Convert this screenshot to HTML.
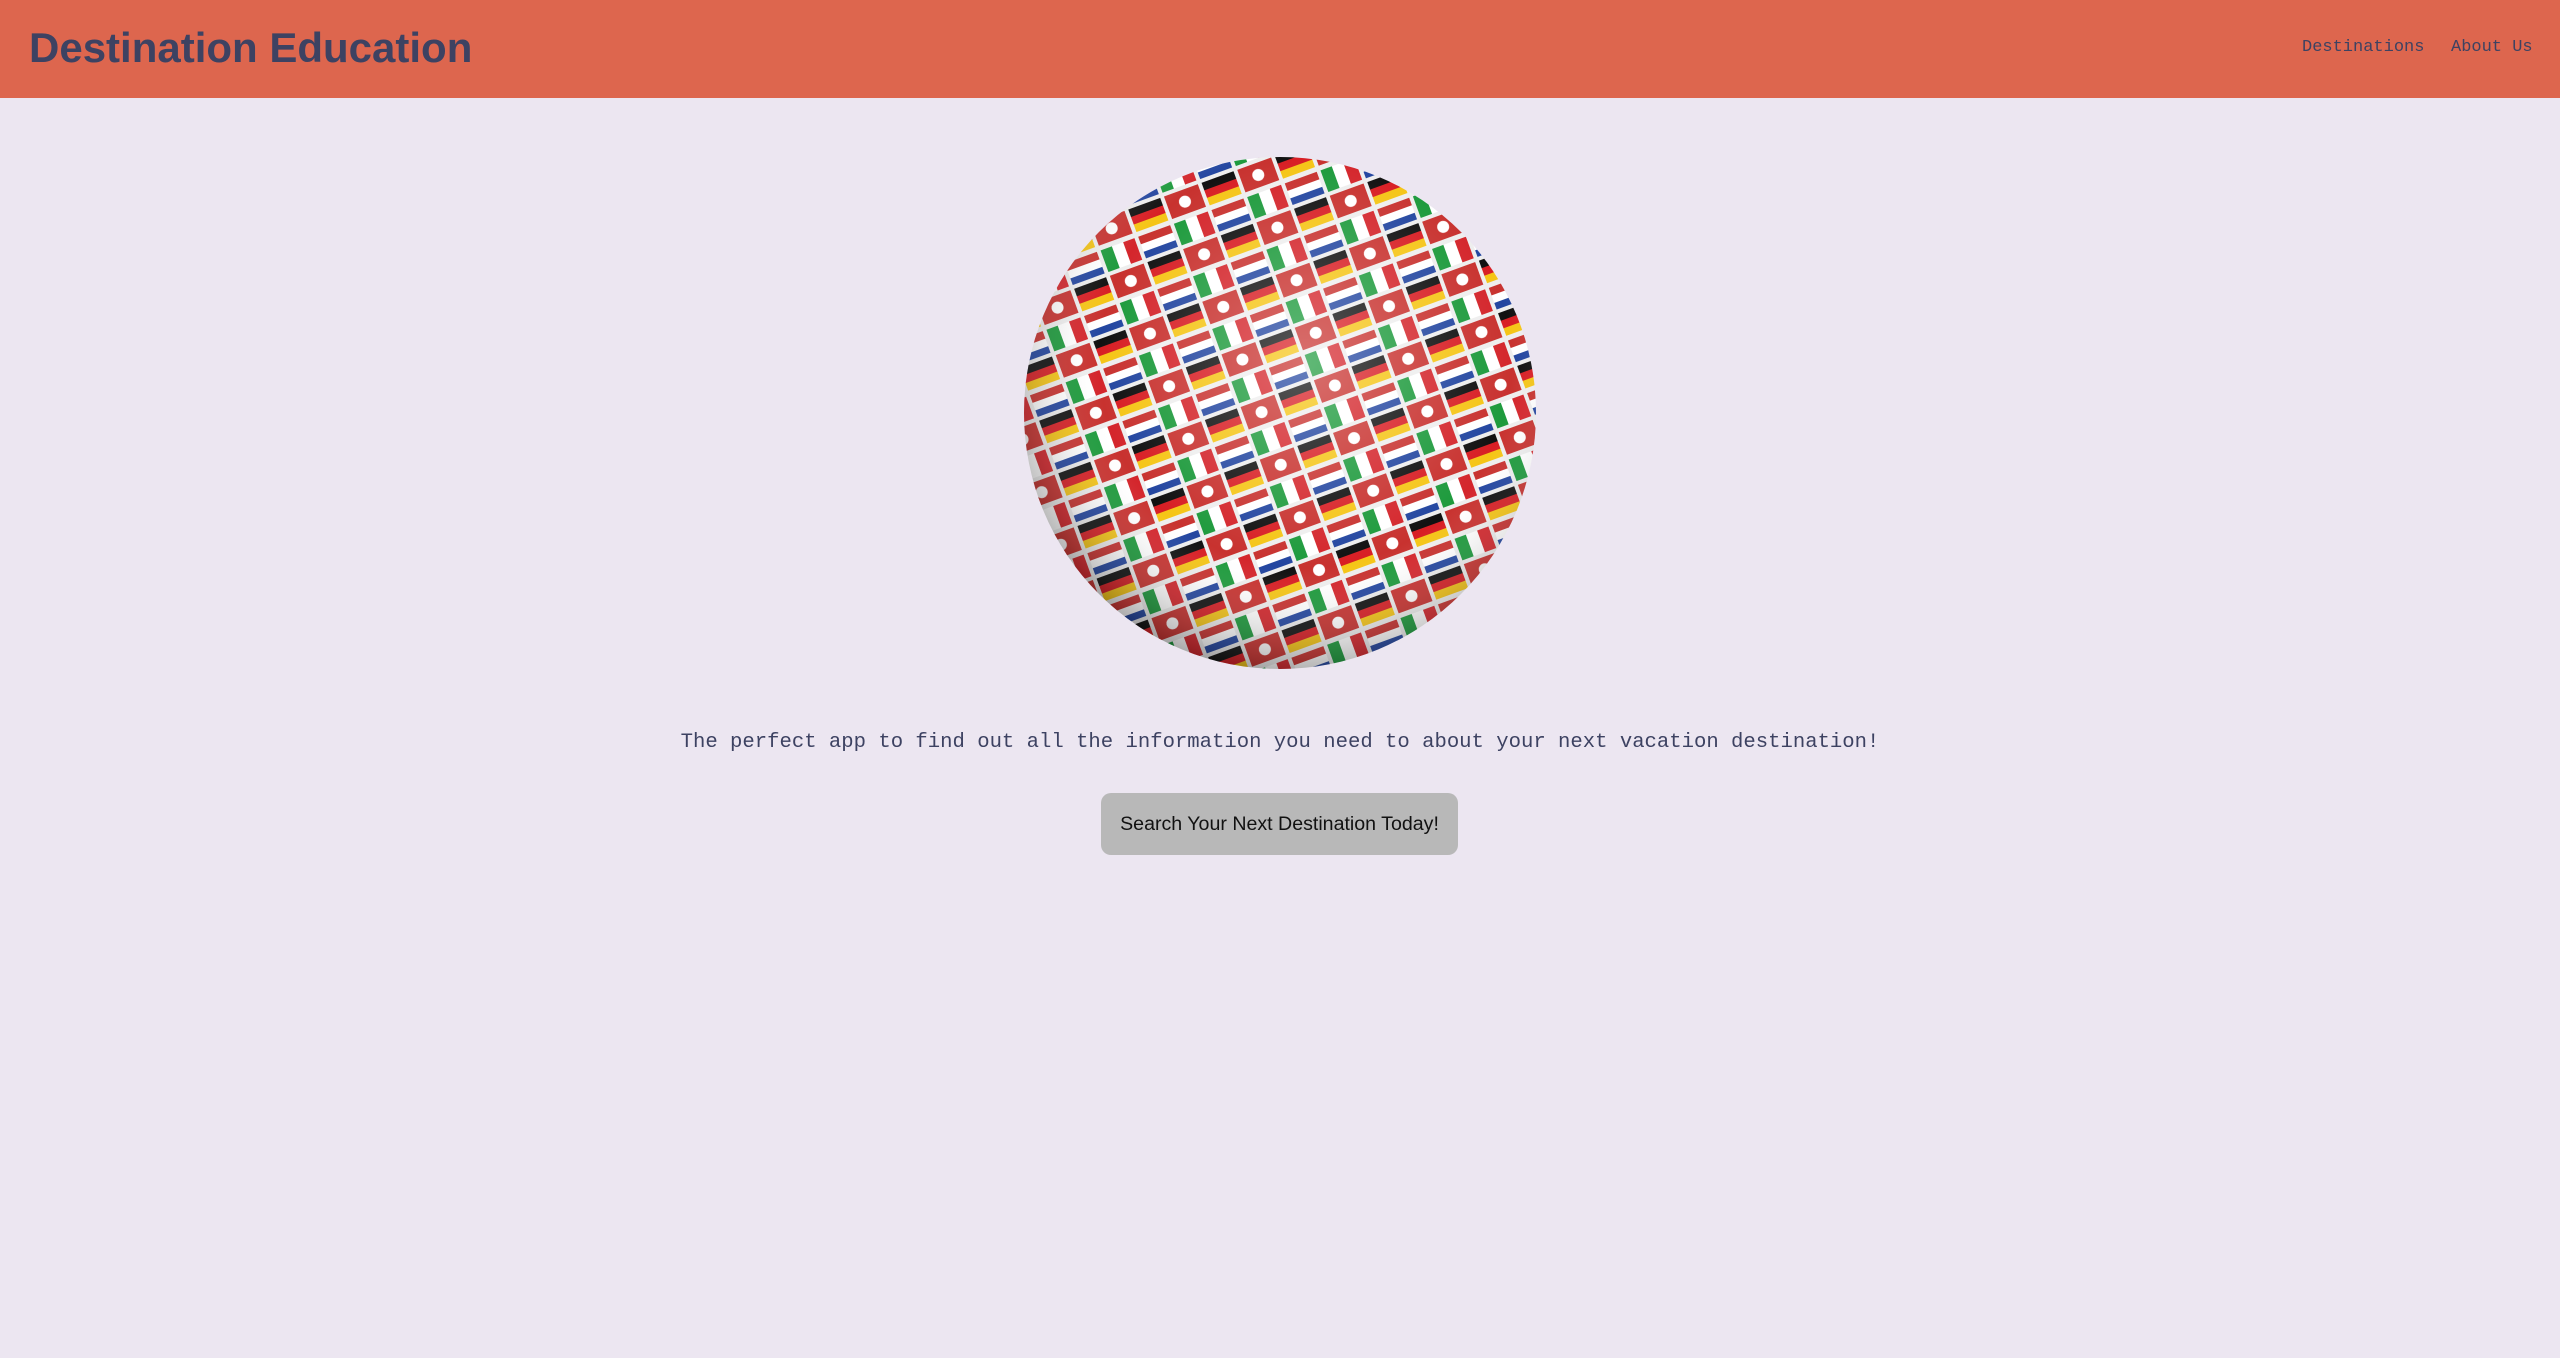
<!DOCTYPE html>
<html><head><meta charset="utf-8"><style>
html,body{margin:0;padding:0;}
body{width:2560px;height:1358px;background:#ece6f1;overflow:hidden;position:relative;font-family:"Liberation Sans",sans-serif;}
header{position:absolute;left:0;top:0;width:2560px;height:98px;background:#dd664e;}
.title{position:absolute;left:29px;top:18px;font-family:"Liberation Sans",sans-serif;font-weight:bold;font-size:42px;color:#3d4262;line-height:60px;}
.nav{position:absolute;top:36px;font-family:"Liberation Mono",monospace;font-size:17px;color:#3d4262;line-height:24px;}
.tag{position:absolute;left:0;width:2560px;top:730px;text-align:center;font-family:"Liberation Mono",monospace;font-size:20.6px;color:#3d4262;line-height:26px;}
.btn{position:absolute;left:1101px;top:793px;width:357px;height:62px;background:#b8b8b8;border-radius:10px;text-align:center;line-height:62px;font-size:19.6px;color:#111;}
</style></head><body>
<header>
<div class="title">Destination Education</div>
<div class="nav" style="left:2302px">Destinations</div>
<div class="nav" style="left:2451px">About Us</div>
</header>
<svg style="position:absolute;left:1024px;top:157px" width="512" height="512" viewBox="0 0 512 512">
<defs>
<clipPath id="c"><circle cx="256" cy="256" r="256"/></clipPath>
<pattern id="p" width="78" height="56" patternUnits="userSpaceOnUse" patternTransform="rotate(-20)">
<rect width="78" height="56" fill="#eeeeee"/>
<rect x="2" y="2" width="34" height="8" fill="#c8322f"/><rect x="2" y="10" width="34" height="8" fill="#fff"/><rect x="2" y="18" width="34" height="7" fill="#2346a0"/>
<rect x="40" y="2" width="12" height="23" fill="#1d9a3c"/><rect x="52" y="2" width="12" height="23" fill="#fff"/><rect x="64" y="2" width="12" height="23" fill="#d4262c"/>
<rect x="2" y="29" width="34" height="8" fill="#111"/><rect x="2" y="37" width="34" height="8" fill="#d81e24"/><rect x="2" y="45" width="34" height="8" fill="#f5c516"/>
<rect x="40" y="29" width="36" height="24" fill="#c8322f"/><circle cx="58" cy="41" r="6" fill="#fff"/>
</pattern>
<radialGradient id="g" cx="0.55" cy="0.4" r="0.62">
<stop offset="0" stop-color="#fff" stop-opacity="0.3"/>
<stop offset="0.65" stop-color="#fff" stop-opacity="0"/>
<stop offset="1" stop-color="#000" stop-opacity="0.35"/>
</radialGradient>
</defs>
<g clip-path="url(#c)">
<rect width="512" height="512" fill="url(#p)"/>
<rect width="512" height="512" fill="url(#g)"/>
</g>
</svg>
<div class="tag">The perfect app to find out all the information you need to about your next vacation destination!</div>
<div class="btn">Search Your Next Destination Today!</div>
</body></html>
